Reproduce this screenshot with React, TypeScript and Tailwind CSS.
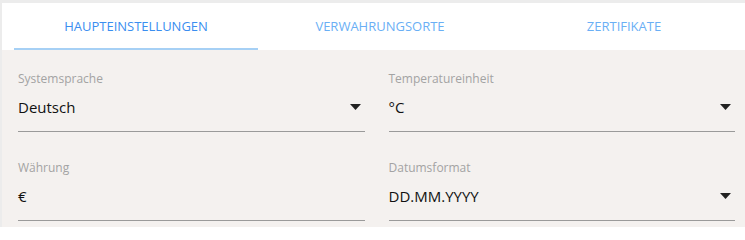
import React from "react";

function Caret() {
  return (
    <svg width="11" height="6" viewBox="0 0 11 6" className="shrink-0">
      <path d="M0 0 L11 0 L5.5 6 Z" fill="#222" />
    </svg>
  );
}

function Field({ label, value, select }: { label: string; value: string; select?: boolean }) {
  return (
    <div className="flex flex-col border-b border-[#9a9a9a]">
      <div className="text-[12px] leading-[16px] text-[#a3a3a3]">{label}</div>
      <div className="mt-[10px] flex items-center justify-between pb-[14px] pr-[4px]">
        <span className="text-[15px] leading-[20px] text-[#111]">{value}</span>
        {select && <Caret />}
      </div>
    </div>
  );
}

export default function App() {
  const tabs = ["HAUPTEINSTELLUNGEN", "VERWAHRUNGSORTE", "ZERTIFIKATE"];
  return (
    <div
      className="flex h-[227px] w-[745px] flex-col overflow-hidden bg-[#ececec] pl-[2px] pt-[3px]"
      style={{ fontFamily: '"Open Sans", "Noto Sans", sans-serif' }}
    >
      <div className="flex h-[47px] shrink-0 bg-white pl-[12px]">
        {tabs.map((t, i) => (
          <div
            key={t}
            className={
              "flex w-[244px] shrink-0 justify-center pt-[15px] text-[13px] leading-[16px] " +
              (i === 0
                ? "border-b-2 border-[#a6d0f5] text-[#3a8ef0]"
                : "text-[#6aaff5]")
            }
          >
            {t}
          </div>
        ))}
      </div>
      <div className="grid flex-1 grid-cols-2 content-start gap-x-[24px] gap-y-[28px] bg-[#f4f1ef] pl-[16px] pr-[10px] pt-[21px]">
        <Field label="Systemsprache" value="Deutsch" select />
        <Field label="Temperatureinheit" value="°C" select />
        <Field label="Währung" value="€" />
        <Field label="Datumsformat" value="DD.MM.YYYY" select />
      </div>
    </div>
  );
}
